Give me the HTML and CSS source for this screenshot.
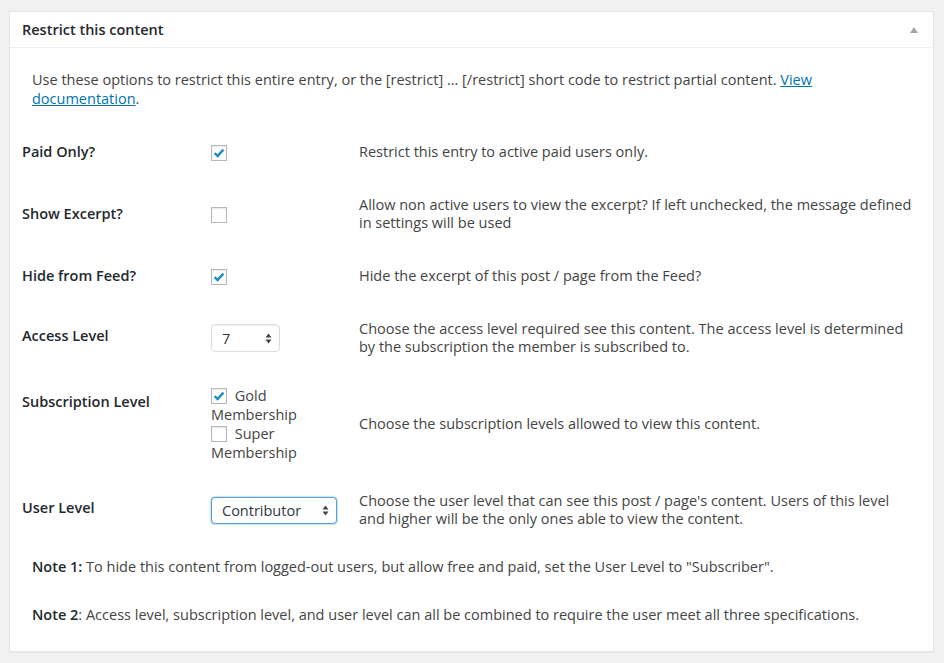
FILE: index.html
```html
<!DOCTYPE html>
<html lang="en">
<head>
    <meta charset="UTF-8" />
    <meta name="viewport" content="width=device-width, initial-scale=1.0" />
    <title>Restrict this content</title>
    <link rel="stylesheet" href="styles.css">
</head>
<body>
    <div class="postbox">
        <div class="postbox-header">
            <h2>Restrict this content</h2>
            <svg class="toggle-arrow" width="8" height="6" viewBox="0 0 8 6">
                <path d="M4 0 L8 6 L0 6 Z" fill="#a0a5aa" />
            </svg>
        </div>
        <div class="inside">
            <p class="intro">Use these options to restrict this entire entry, or the [restrict] ... [/restrict] short code to restrict partial content. <a href="#">View documentation</a>.</p>

            <table class="form-table">
                <tr>
                    <th>Paid Only?</th>
                    <td class="control">
                        <span class="checkbox checked">
                            <svg width="14" height="14" viewBox="0 0 14 14"><path d="M2.6 7.2 L5.6 10 L11.4 3.6" /></svg>
                        </span>
                    </td>
                    <td class="desc">Restrict this entry to active paid users only.</td>
                </tr>
                <tr>
                    <th>Show Excerpt?</th>
                    <td class="control">
                        <span class="checkbox"></span>
                    </td>
                    <td class="desc">Allow non active users to view the excerpt? If left unchecked, the message defined in settings will be used</td>
                </tr>
                <tr>
                    <th>Hide from Feed?</th>
                    <td class="control">
                        <span class="checkbox checked">
                            <svg width="14" height="14" viewBox="0 0 14 14"><path d="M2.6 7.2 L5.6 10 L11.4 3.6" /></svg>
                        </span>
                    </td>
                    <td class="desc">Hide the excerpt of this post / page from the Feed?</td>
                </tr>
                <tr>
                    <th class="lift">Access Level</th>
                    <td class="control">
                        <div class="select small">
                            <select>
                                <option>7</option>
                            </select>
                            <svg class="select-arrows" width="7" height="11" viewBox="0 0 7 11">
                                <path d="M3.5 0.5 L6.5 4.5 L0.5 4.5 Z M3.5 10.5 L6.5 6.5 L0.5 6.5 Z" fill="#444" />
                            </svg>
                        </div>
                    </td>
                    <td class="desc">Choose the access level required see this content. The access level is determined by the subscription the member is subscribed to.</td>
                </tr>
                <tr>
                    <th class="top">Subscription Level</th>
                    <td class="control levels">
                        <label>
                            <span class="checkbox checked">
                                <svg width="14" height="14" viewBox="0 0 14 14"><path d="M2.6 7.2 L5.6 10 L11.4 3.6" /></svg>
                            </span>
                            Gold Membership
                        </label>
                        <label>
                            <span class="checkbox"></span>
                            Super Membership
                        </label>
                    </td>
                    <td class="desc">Choose the subscription levels allowed to view this content.</td>
                </tr>
                <tr>
                    <th class="lift">User Level</th>
                    <td class="control">
                        <div class="select wide focused">
                            <select>
                                <option>Contributor</option>
                            </select>
                            <svg class="select-arrows" width="7" height="11" viewBox="0 0 7 11">
                                <path d="M3.5 0.5 L6.5 4.5 L0.5 4.5 Z M3.5 10.5 L6.5 6.5 L0.5 6.5 Z" fill="#444" />
                            </svg>
                        </div>
                    </td>
                    <td class="desc">Choose the user level that can see this post / page's content. Users of this level and higher will be the only ones able to view the content.</td>
                </tr>
            </table>

            <p class="note"><strong>Note 1:</strong> To hide this content from logged-out users, but allow free and paid, set the User Level to "Subscriber".</p>
            <p class="note"><strong>Note 2</strong>: Access level, subscription level, and user level can all be combined to require the user meet all three specifications.</p>
        </div>
    </div>
</body>
</html>
```

FILE: styles.css
```css
* {
    box-sizing: border-box;
}

body {
    margin: 0;
    padding: 11px 10px 11px 9px;
    background: #f1f1f1;
    font-family: 'Open Sans', 'Liberation Sans', sans-serif;
    font-size: 14.5px;
    color: #444;
}

.postbox {
    width: 925px;
    background: #fff;
    border: 1px solid #e5e5e5;
    box-shadow: 0 1px 1px rgba(0, 0, 0, 0.04);
}

.postbox-header {
    display: flex;
    align-items: center;
    justify-content: space-between;
    height: 36px;
    padding: 0 15px 0 12px;
    border-bottom: 1px solid #eee;
}

.postbox-header h2 {
    margin: 0;
    font-size: 14.5px;
    font-weight: 600;
    color: #23282d;
}

.toggle-arrow {
    margin-top: 1px;
}

.inside {
    padding: 22px 12px 27px;
}

.intro {
    margin: 0 0 15px;
    padding: 0 10px;
    line-height: 19px;
}

.intro a {
    color: #0073aa;
    text-decoration: underline;
}

/* Options table */
.form-table {
    width: 100%;
    border-collapse: collapse;
}

.form-table th {
    width: 189px;
    padding: 20px 10px 20px 0;
    text-align: left;
    vertical-align: middle;
    font-weight: 600;
    line-height: 18px;
    color: #23282d;
}

.form-table th.lift {
    padding-bottom: 24px;
}

.form-table th.top {
    vertical-align: top;
    padding-top: 22px;
}

.form-table td {
    padding: 15px 10px 15px 0;
    vertical-align: middle;
    line-height: 18px;
}

.form-table td.control {
    width: 148px;
}

.form-table td.desc {
    padding-right: 9px;
}

.checkbox {
    display: inline-flex;
    align-items: center;
    justify-content: center;
    width: 16px;
    height: 16px;
    border: 1px solid #b4b9be;
    background: #fff;
    box-shadow: inset 0 1px 2px rgba(0, 0, 0, 0.1);
    vertical-align: middle;
}

.checkbox svg path {
    fill: none;
    stroke: #1e8cbe;
    stroke-width: 2.4;
}

.form-table td.levels {
    line-height: 19px;
}

.levels label {
    display: block;
    padding-right: 12px;
}

.levels .checkbox {
    margin: -3px 4px 0 0;
}

/* Selects */
.select {
    position: relative;
    display: inline-block;
    vertical-align: middle;
}

.select select {
    appearance: none;
    -webkit-appearance: none;
    display: block;
    height: 28px;
    padding: 0 10px;
    border: 1px solid #ddd;
    border-radius: 4px;
    background: #fff;
    font-family: inherit;
    font-size: 14.5px;
    color: #32373c;
    box-shadow: inset 0 1px 2px rgba(0, 0, 0, 0.07);
}

.select.small select {
    width: 69px;
}

.select.wide select {
    width: 126px;
    height: 27px;
}

.select.focused select {
    border-color: #5b9dd9;
    box-shadow: 0 0 2px rgba(30, 140, 190, 0.8);
}

.select-arrows {
    position: absolute;
    right: 8px;
    top: 50%;
    margin-top: -5px;
    pointer-events: none;
}

/* Notes */
.note {
    margin: 15px 0 0;
    padding: 0 10px;
    line-height: 18px;
}

.note + .note {
    margin-top: 30px;
}

.note strong {
    font-weight: 600;
    color: #23282d;
}
```
